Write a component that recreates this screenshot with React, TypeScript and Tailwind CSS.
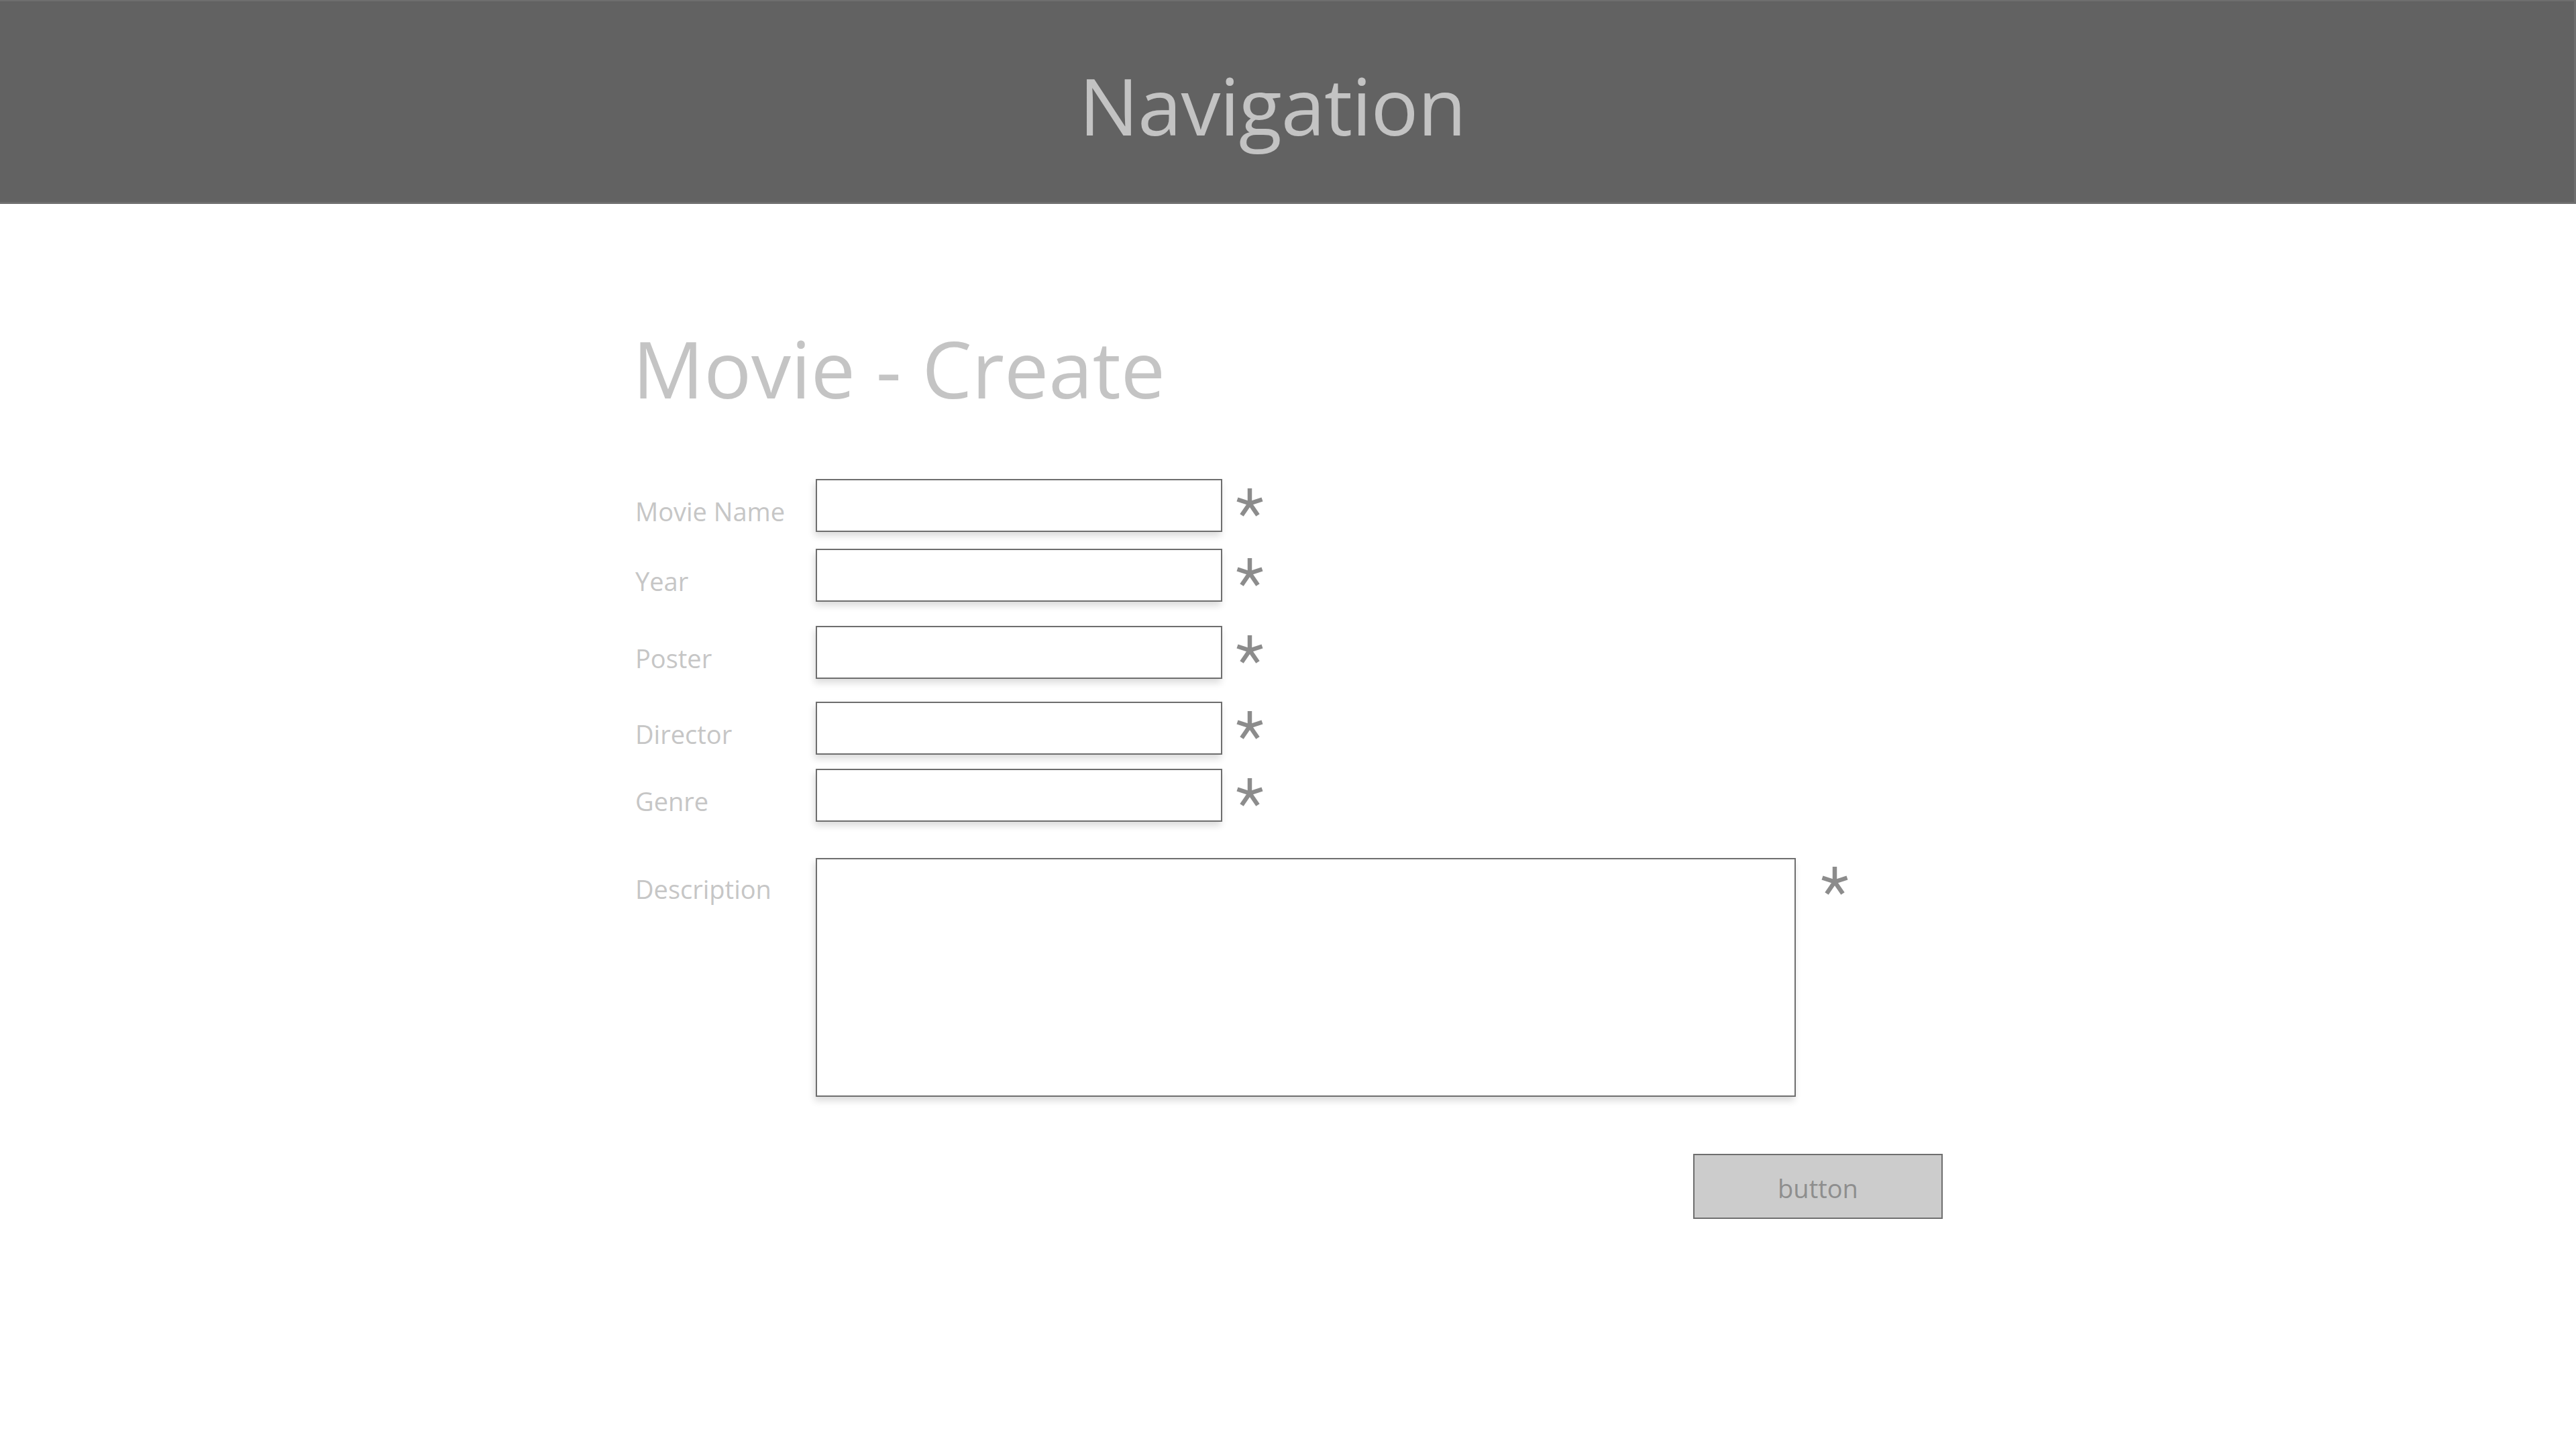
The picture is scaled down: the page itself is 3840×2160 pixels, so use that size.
const Star = () => (
  <svg viewBox="0 0 40 42" className="w-[40px] h-[42px] overflow-visible" fill="none" stroke="#8c8c8c" strokeWidth={6.5}>
    <line x1="20" y1="22.5" x2="20" y2="0" />
    <line x1="20" y1="22.5" x2="1.5" y2="16.5" />
    <line x1="20" y1="22.5" x2="38.5" y2="16.5" />
    <line x1="20" y1="22.5" x2="8" y2="40" />
    <line x1="20" y1="22.5" x2="32" y2="40" />
  </svg>
);

const fields = [
  { label: 'Movie Name', gap: 'mt-[106px]' },
  { label: 'Year', gap: 'mt-[25px]' },
  { label: 'Poster', gap: 'mt-[36px]' },
  { label: 'Director', gap: 'mt-[34px]' },
  { label: 'Genre', gap: 'mt-[21px]' },
];

export default function App() {
  return (
    <div className="min-h-screen bg-white font-['Open_Sans',sans-serif]">
      <header className="h-[304px] bg-[#626262] border-b-[3px] border-r-[3px] border-t-2 border-[#6e6e6e] flex items-center justify-center">
        <h1 className="text-[118px] leading-none text-[#c3c3c3] tracking-[-0.01em] pt-[10px] pr-[44px]">Navigation</h1>
      </header>

      <main className="w-[1952px] mx-auto">
        <h2 className="mt-[186px] text-[118px] leading-none text-[#c4c4c4] -ml-[1px]">Movie - Create</h2>

        <form>
          {fields.map(f => (
            <div key={f.label} className={`flex items-start ${f.gap}`}>
              <label className="w-[272px] pl-[3px] pt-[29px] text-[38px] leading-none text-[#c6c6c6]">{f.label}</label>
              <input className="w-[606px] h-[79px] bg-white border-2 border-[#6e6e6e] shadow-[-2px_6px_10px_rgba(0,0,0,0.14)] outline-none" />
              <div className="ml-[21px] mt-[14px]"><Star /></div>
            </div>
          ))}

          <div className="flex items-start mt-[54px]">
            <label className="w-[272px] pl-[3px] pt-[27px] text-[38px] leading-none text-[#c6c6c6]">Description</label>
            <textarea className="w-[1461px] h-[356px] bg-white border-2 border-[#6e6e6e] shadow-[-2px_6px_10px_rgba(0,0,0,0.14)] outline-none resize-none" />
            <div className="ml-[38px] mt-[13px]"><Star /></div>
          </div>

          <div className="flex justify-end mt-[85px]">
            <button type="button" className="w-[372px] h-[97px] bg-[#cccccc] border-2 border-[#6e6e6e] text-[38px] leading-none text-[#8e8e8e] pt-[4px]">
              button
            </button>
          </div>
        </form>
      </main>
    </div>
  );
}
